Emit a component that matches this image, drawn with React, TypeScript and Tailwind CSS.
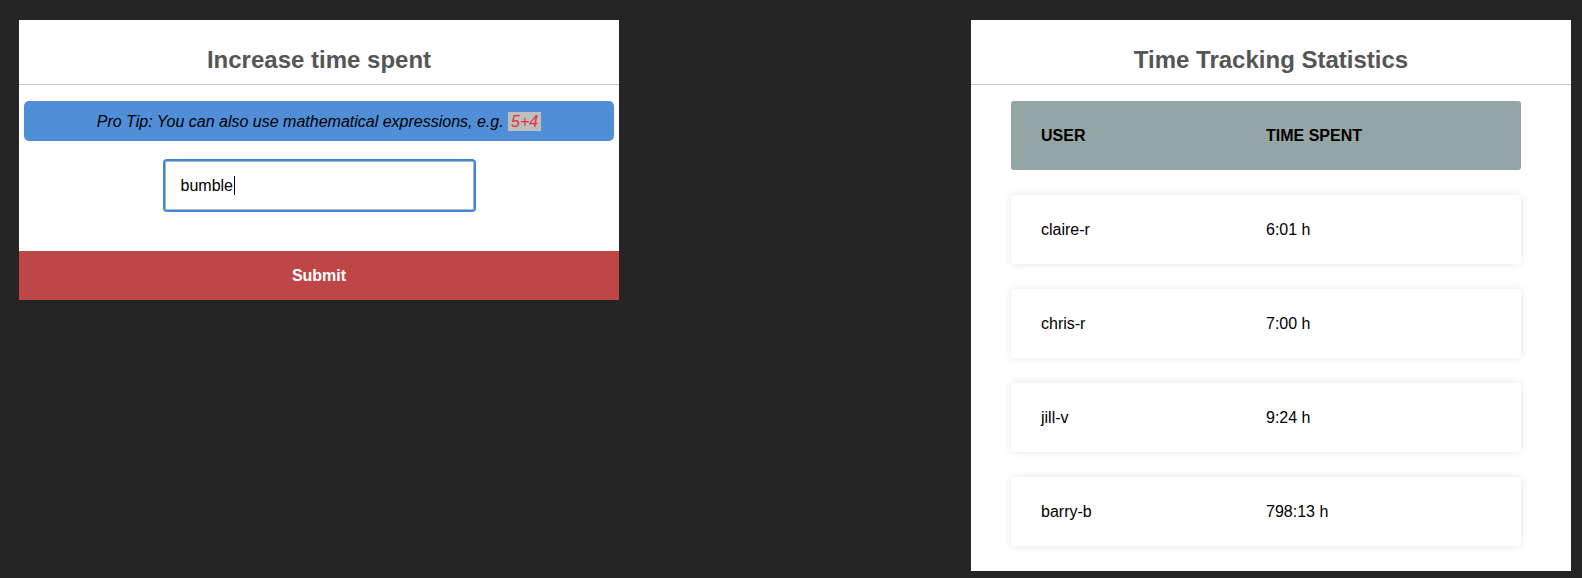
import React from 'react';

interface Entry {
  user: string;
  time: string;
}

const entries: Entry[] = [
  { user: 'claire-r', time: '6:01 h' },
  { user: 'chris-r', time: '7:00 h' },
  { user: 'jill-v', time: '9:24 h' },
  { user: 'barry-b', time: '798:13 h' },
];

function PanelTitle({ children }: { children: React.ReactNode }) {
  return (
    <h2 className="border-b border-[#c4c4c4] pt-6 pb-2 text-center text-2xl leading-8 font-bold text-[#555555]">
      {children}
    </h2>
  );
}

export default function App() {
  return (
    <div
      className="flex min-h-[578px] w-full items-start justify-between bg-[#252525] pt-5 pr-[11px] pl-[19px]"
      style={{ fontFamily: '"Liberation Sans", Arial, sans-serif' }}
    >
      {/* Increase time spent */}
      <div className="w-[600px] bg-white">
        <PanelTitle>Increase time spent</PanelTitle>

        <div className="px-[5px] pt-4">
          <div className="flex h-10 items-center justify-center rounded-[5px] bg-[#508ed8] text-base leading-[19px] text-black italic">
            Pro Tip: You can also use mathematical expressions, e.g.&nbsp;
            <span className="bg-[#bebebe] px-[3px] text-[#e0303e]">5+4</span>
          </div>
        </div>

        <div className="flex justify-center pt-[20px] pb-[41px]">
          <div className="flex h-[49px] w-[309px] items-center rounded-[2px] border border-[#b8b8b8] pl-[15px] text-base text-black outline-2 outline-[#3d85de]">
            bumble
            <span className="ml-[1px] inline-block h-[19px] w-px bg-black" />
          </div>
        </div>

        <button className="flex h-[49px] w-full items-center justify-center bg-[#bf4646] text-base font-bold text-white">
          Submit
        </button>
      </div>

      {/* Time Tracking Statistics */}
      <div className="w-[600px] bg-white">
        <PanelTitle>Time Tracking Statistics</PanelTitle>

        <ul className="ml-10 w-[510px] pt-4">
          <li className="mb-[25px] flex rounded-[3px] bg-[#95a5a6] px-[30px] py-[25px] text-base leading-[19px] font-bold text-black uppercase">
            <div className="basis-1/2">User</div>
            <div className="basis-1/2">Time Spent</div>
          </li>
          {entries.map((entry) => (
            <li
              key={entry.user}
              className="mb-[25px] flex rounded-[3px] bg-white px-[30px] py-[25px] text-base leading-[19px] text-black shadow-[0_0_9px_0_rgba(0,0,0,0.1)]"
            >
              <div className="basis-1/2">{entry.user}</div>
              <div className="basis-1/2">{entry.time}</div>
            </li>
          ))}
        </ul>
      </div>
    </div>
  );
}
